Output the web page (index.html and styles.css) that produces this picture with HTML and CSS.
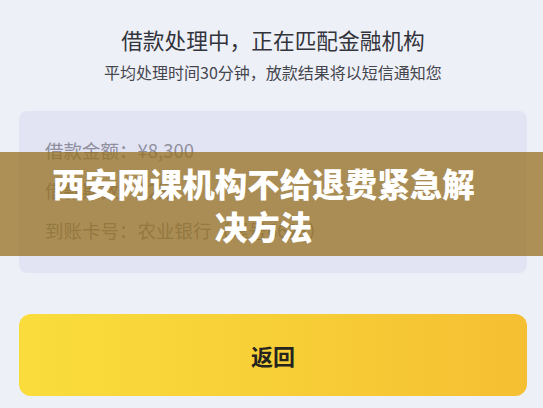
FILE: index.html
```html
<!doctype html>
<html lang="zh-CN">
<head>
  <meta charset="utf-8">
  <title>借款处理中</title>
  <meta name="viewport" content="width=device-width, initial-scale=1">
  <link rel="stylesheet" href="styles.css">
</head>
<body>
  <div class="page">
    <div class="status">
      <h1 class="status_title">借款处理中，正在匹配金融机构</h1>
      <p class="status_sub">平均处理时间30分钟，放款结果将以短信通知您</p>
    </div>

    <div class="info_card">
      <div class="info_row">借款金额：¥8,300</div>
      <div class="info_row">借款期数：12期</div>
      <div class="info_row">到账卡号：农业银行（尾号6628）</div>
    </div>

    <button type="button" class="btn_back">返回</button>

    <div class="banner">
      <span class="banner_text">西安网课机构不给退费紧急解决方法</span>
    </div>
  </div>
</body>
</html>
```

FILE: styles.css
```css
html,
body {
  margin: 0;
  padding: 0;
  background: #eef0f8;
  font-family: "Noto Sans CJK SC", "Noto Sans", sans-serif;
}

.page {
  position: relative;
  width: 543px;
  height: 408px;
  padding: 25px 16px 0 19px;
  box-sizing: border-box;
}

.status {
  display: flex;
  flex-direction: column;
  align-items: center;
}

.status_title {
  margin: 0;
  font-size: 21.7px;
  line-height: 30px;
  font-weight: 400;
  color: #33343b;
}

.status_sub {
  margin: 6px 0 0;
  font-size: 16px;
  line-height: 22px;
  color: #45464d;
}

.info_card {
  display: flex;
  flex-direction: column;
  gap: 14px;
  margin-top: 28px;
  padding: 26px 26px 30px;
  background: #e2e3f3;
  border-radius: 8px;
}

.info_row {
  font-size: 18.5px;
  line-height: 26px;
  color: #8f8f9e;
}

.btn_back {
  display: block;
  width: 100%;
  height: 82px;
  margin-top: 41px;
  border: none;
  border-radius: 12px;
  background: linear-gradient(90deg, #fadd3c 0%, #f7cc36 60%, #f5bf32 100%);
  font-family: inherit;
  font-size: 22px;
  font-weight: 700;
  color: #26241e;
  cursor: pointer;
}

/* caption strip laid over the card */
.banner {
  position: absolute;
  left: 0;
  right: 0;
  top: 152px;
  height: 104px;
  display: flex;
  align-items: center;
  justify-content: center;
  padding: 0 60px 0 44px;
  background: rgba(150, 112, 32, 0.75);
}

.banner_text {
  font-size: 32.5px;
  line-height: 43px;
  font-weight: 900;
  color: #fff;
  text-align: center;
}
```
